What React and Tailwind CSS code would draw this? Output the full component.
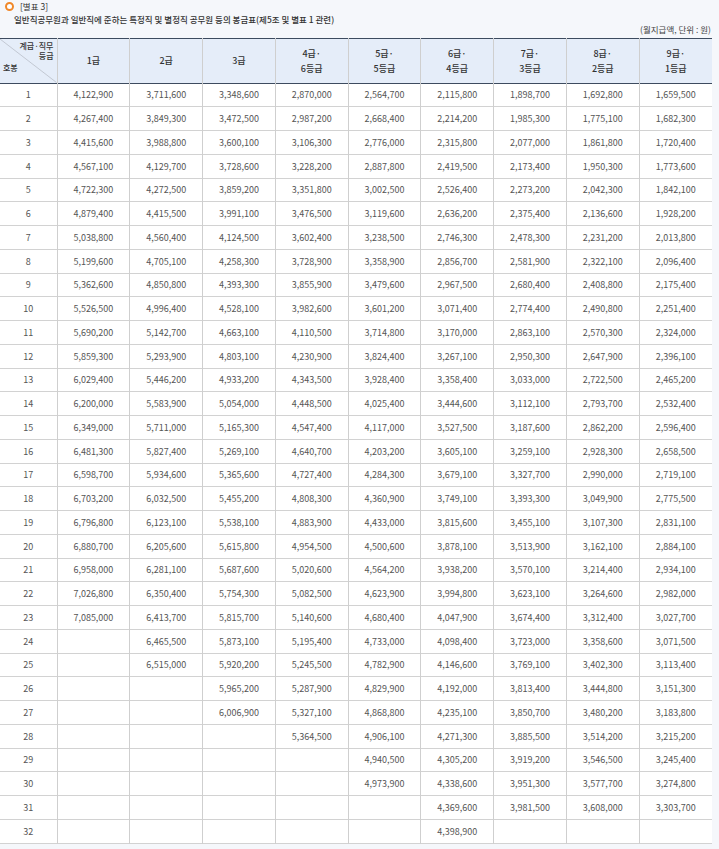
import React from "react";

const rows = [
  ["4,122,900", "3,711,600", "3,348,600", "2,870,000", "2,564,700", "2,115,800", "1,898,700", "1,692,800", "1,659,500"],
  ["4,267,400", "3,849,300", "3,472,500", "2,987,200", "2,668,400", "2,214,200", "1,985,300", "1,775,100", "1,682,300"],
  ["4,415,600", "3,988,800", "3,600,100", "3,106,300", "2,776,000", "2,315,800", "2,077,000", "1,861,800", "1,720,400"],
  ["4,567,100", "4,129,700", "3,728,600", "3,228,200", "2,887,800", "2,419,500", "2,173,400", "1,950,300", "1,773,600"],
  ["4,722,300", "4,272,500", "3,859,200", "3,351,800", "3,002,500", "2,526,400", "2,273,200", "2,042,300", "1,842,100"],
  ["4,879,400", "4,415,500", "3,991,100", "3,476,500", "3,119,600", "2,636,200", "2,375,400", "2,136,600", "1,928,200"],
  ["5,038,800", "4,560,400", "4,124,500", "3,602,400", "3,238,500", "2,746,300", "2,478,300", "2,231,200", "2,013,800"],
  ["5,199,600", "4,705,100", "4,258,300", "3,728,900", "3,358,900", "2,856,700", "2,581,900", "2,322,100", "2,096,400"],
  ["5,362,600", "4,850,800", "4,393,300", "3,855,900", "3,479,600", "2,967,500", "2,680,400", "2,408,800", "2,175,400"],
  ["5,526,500", "4,996,400", "4,528,100", "3,982,600", "3,601,200", "3,071,400", "2,774,400", "2,490,800", "2,251,400"],
  ["5,690,200", "5,142,700", "4,663,100", "4,110,500", "3,714,800", "3,170,000", "2,863,100", "2,570,300", "2,324,000"],
  ["5,859,300", "5,293,900", "4,803,100", "4,230,900", "3,824,400", "3,267,100", "2,950,300", "2,647,900", "2,396,100"],
  ["6,029,400", "5,446,200", "4,933,200", "4,343,500", "3,928,400", "3,358,400", "3,033,000", "2,722,500", "2,465,200"],
  ["6,200,000", "5,583,900", "5,054,000", "4,448,500", "4,025,400", "3,444,600", "3,112,100", "2,793,700", "2,532,400"],
  ["6,349,000", "5,711,000", "5,165,300", "4,547,400", "4,117,000", "3,527,500", "3,187,600", "2,862,200", "2,596,400"],
  ["6,481,300", "5,827,400", "5,269,100", "4,640,700", "4,203,200", "3,605,100", "3,259,100", "2,928,300", "2,658,500"],
  ["6,598,700", "5,934,600", "5,365,600", "4,727,400", "4,284,300", "3,679,100", "3,327,700", "2,990,000", "2,719,100"],
  ["6,703,200", "6,032,500", "5,455,200", "4,808,300", "4,360,900", "3,749,100", "3,393,300", "3,049,900", "2,775,500"],
  ["6,796,800", "6,123,100", "5,538,100", "4,883,900", "4,433,000", "3,815,600", "3,455,100", "3,107,300", "2,831,100"],
  ["6,880,700", "6,205,600", "5,615,800", "4,954,500", "4,500,600", "3,878,100", "3,513,900", "3,162,100", "2,884,100"],
  ["6,958,000", "6,281,100", "5,687,600", "5,020,600", "4,564,200", "3,938,200", "3,570,100", "3,214,400", "2,934,100"],
  ["7,026,800", "6,350,400", "5,754,300", "5,082,500", "4,623,900", "3,994,800", "3,623,100", "3,264,600", "2,982,000"],
  ["7,085,000", "6,413,700", "5,815,700", "5,140,600", "4,680,400", "4,047,900", "3,674,400", "3,312,400", "3,027,700"],
  ["", "6,465,500", "5,873,100", "5,195,400", "4,733,000", "4,098,400", "3,723,000", "3,358,600", "3,071,500"],
  ["", "6,515,000", "5,920,200", "5,245,500", "4,782,900", "4,146,600", "3,769,100", "3,402,300", "3,113,400"],
  ["", "", "5,965,200", "5,287,900", "4,829,900", "4,192,000", "3,813,400", "3,444,800", "3,151,300"],
  ["", "", "6,006,900", "5,327,100", "4,868,800", "4,235,100", "3,850,700", "3,480,200", "3,183,800"],
  ["", "", "", "5,364,500", "4,906,100", "4,271,300", "3,885,500", "3,514,200", "3,215,200"],
  ["", "", "", "", "4,940,500", "4,305,200", "3,919,200", "3,546,500", "3,245,400"],
  ["", "", "", "", "4,973,900", "4,338,600", "3,951,300", "3,577,700", "3,274,800"],
  ["", "", "", "", "", "4,369,600", "3,981,500", "3,608,000", "3,303,700"],
  ["", "", "", "", "", "4,398,900", "", "", ""],
];

const grades = [
  ["1급"],
  ["2급"],
  ["3급"],
  ["4급·", "6등급"],
  ["5급·", "5등급"],
  ["6급·", "4등급"],
  ["7급·", "3등급"],
  ["8급·", "2등급"],
  ["9급·", "1등급"],
];

const SalaryTable = () => {
  return (
    <table className="w-[712px] table-fixed border-collapse bg-white text-[9px] leading-[11px]">
      <colgroup>
        <col className="w-[57px]" />
        {grades.map((g, i) => (
          <col key={i} />
        ))}
      </colgroup>
      <thead>
        <tr className="h-[43.5px] bg-[#e5edf9] border-t border-b border-[#3d4b5f]">
          <th className="relative p-0 border-r border-[#cfcfcf] font-medium text-[#333]">
            <svg className="absolute inset-0 w-full h-full" viewBox="0 0 57 45" preserveAspectRatio="none">
              <line x1="0" y1="0" x2="57" y2="45" stroke="#b8bec8" strokeWidth="0.8" />
            </svg>
            <div className="relative flex flex-col h-[43.5px] px-[3px] pt-[2px]">
              <span className="self-end text-right text-[8px] leading-[10px]">
                계급·직무
                <br />
                등급
              </span>
              <span className="self-start mt-[2px] text-[8px] leading-[10px]">호봉</span>
            </div>
          </th>
          {grades.map((g, i) => (
            <th key={i} className="p-0 border-r border-[#cfcfcf] last:border-r-0 font-medium text-[#333] leading-[15px]">
              {g.map((line, j) => (
                <div key={j}>{line}</div>
              ))}
            </th>
          ))}
        </tr>
      </thead>
      <tbody>
        {rows.map((r, i) => (
          <tr key={i} className="h-[23.75px] border-b border-[#d2d2d2]">
            <td className="p-0 text-center text-[#555] border-r border-[#cfcfcf]">{i + 1}</td>
            {r.map((v, j) => (
              <td key={j} className="p-0 text-center text-[#555] border-r border-[#cfcfcf] last:border-r-0">
                {v}
              </td>
            ))}
          </tr>
        ))}
      </tbody>
    </table>
  );
};

export default function App() {
  return (
    <div className="w-[719px] h-[849px] overflow-hidden bg-[#f5f7fb] font-['Noto_Sans_CJK_KR','Noto_Sans',sans-serif] text-[#333]">
      <div className="pl-[5px] pt-[1px]">
        <div className="flex items-center gap-[6px] h-[11.5px]">
          <span className="w-[9px] h-[9px] rounded-full border-2 border-[#f0882a] bg-white"></span>
          <span className="text-[8.5px] leading-[11.5px] text-[#333]">[별표 3]</span>
        </div>
        <div className="pl-[9px] text-[8.5px] leading-[12.5px] font-medium text-[#333]">
          일반직공무원과 일반직에 준하는 특정직 및 별정직 공무원 등의 봉급표(제5조 및 별표 1 관련)
        </div>
      </div>
      <div className="h-[9px] mb-[4px] pr-[8px] text-right text-[8.5px] leading-[9px] text-[#444]">
        (월지급액, 단위 : 원)
      </div>
      <SalaryTable />
    </div>
  );
}
